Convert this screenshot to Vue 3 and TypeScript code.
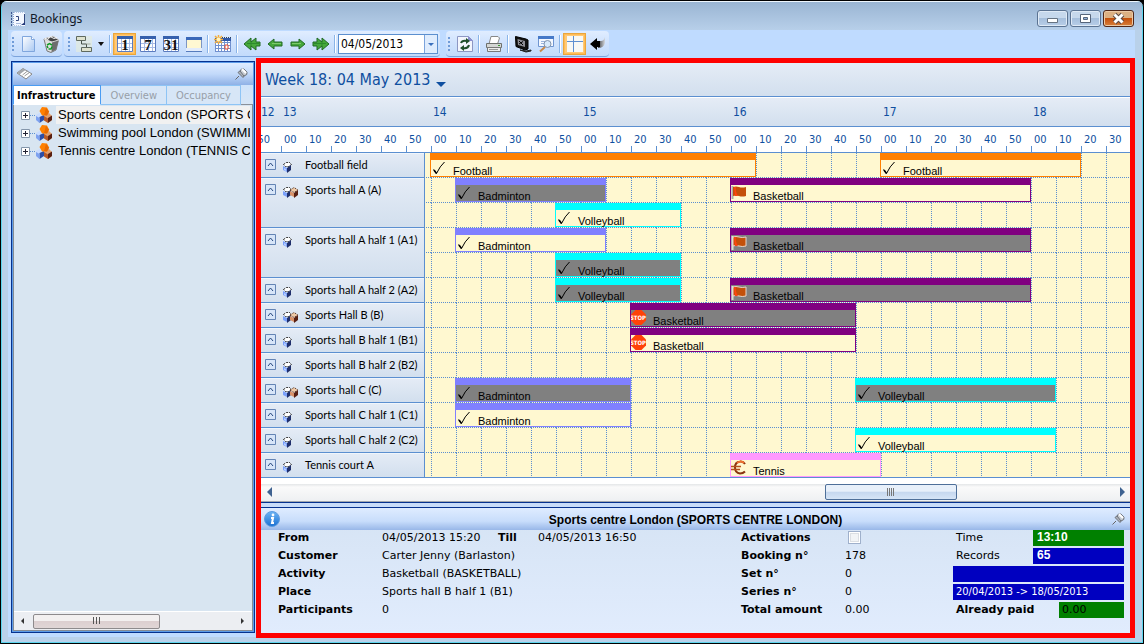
<script setup lang="ts">
import { ref } from 'vue'

interface Booking {
  title: string
  start: number
  length: number
  lane: number
  tone: string
  mark: string
  blocked?: boolean
}
interface Resource {
  name: string
  lanes: number
  combined?: boolean
  bookings: Booking[]
}

// Each slot lasts ten minutes; slot 0 begins at 14:00.
const b = (title: string, tone: string, mark: string, start: number, length: number, blocked = false, lane = 1): Booking =>
  ({ title, tone, mark, start, length, blocked, lane })

const resources: Resource[] = [
  { name: 'Football field', lanes: 1, bookings: [b('Football', 'orange', 'check', 0, 13), b('Football', 'orange', 'check', 18, 8)] },
  {
    name: 'Sports hall A (A)', lanes: 2, combined: true,
    bookings: [b('Badminton', 'violet', 'check', 1, 6, true), b('Basketball', 'purple', 'flag', 12, 12), b('Volleyball', 'cyan', 'check', 5, 5, false, 2)],
  },
  {
    name: 'Sports hall A half 1 (A1)', lanes: 2,
    bookings: [b('Badminton', 'violet', 'check', 1, 6), b('Basketball', 'purple', 'flag', 12, 12, true), b('Volleyball', 'cyan', 'check', 5, 5, true, 2)],
  },
  { name: 'Sports hall A half 2 (A2)', lanes: 1, bookings: [b('Volleyball', 'cyan', 'check', 5, 5, true), b('Basketball', 'purple', 'flag', 12, 12, true)] },
  { name: 'Sports Hall B (B)', lanes: 1, combined: true, bookings: [b('Basketball', 'purple', 'stop', 8, 9, true)] },
  { name: 'Sports hall B half 1 (B1)', lanes: 1, bookings: [b('Basketball', 'purple', 'stop', 8, 9)] },
  { name: 'Sports hall B half 2 (B2)', lanes: 1, bookings: [] },
  { name: 'Sports hall C (C)', lanes: 1, combined: true, bookings: [b('Badminton', 'violet', 'check', 1, 7, true), b('Volleyball', 'cyan', 'check', 17, 8, true)] },
  { name: 'Sports hall C half 1 (C1)', lanes: 1, bookings: [b('Badminton', 'violet', 'check', 1, 7)] },
  { name: 'Sports hall C half 2 (C2)', lanes: 1, bookings: [b('Volleyball', 'cyan', 'check', 17, 8)] },
  { name: 'Tennis court A', lanes: 1, bookings: [b('Tennis', 'pink', 'euro', 12, 6)] },
]

const hours = [13, 14, 15, 16, 17, 18]
const minutes = ['00', '10', '20', '30', '40', '50']
const centres = ['Sports centre London (SPORTS CENTRE LONDON)', 'Swimming pool London (SWIMMING POOL LONDON)', 'Tennis centre London (TENNIS CENTRE LONDON)']
const tabs = ['Infrastructure', 'Overview', 'Occupancy']
const activeTab = ref('Infrastructure')
const date = ref('04/05/2013')
const activated = ref(false)

const views = [
  { id: 'day', label: 'Day', digits: '1' },
  { id: 'week', label: 'Week', digits: '7' },
  { id: 'month', label: 'Month', digits: '31' },
]
const view = ref('day')
const steps = [
  { icon: 'i-prev2', label: 'Previous week' },
  { icon: 'i-prev', label: 'Previous day' },
  { icon: 'i-next', label: 'Next day' },
  { icon: 'i-next2', label: 'Next week' },
]
</script>

<template>
  <svg class="defs" width="0" height="0" aria-hidden="true">
    <defs>
      <pattern id="slots" x="6" y="0" width="25" height="25" patternUnits="userSpaceOnUse">
        <path d="M.5 0V25" stroke="#5b8fd0" stroke-dasharray="1 1" />
        <path d="M0 24.5H25" stroke="#5b8fd0" stroke-dasharray="1 1" />
      </pattern>
      <linearGradient id="g-page" x1="0" y1="0" x2="1" y2="1"><stop offset="0" stop-color="#fff" /><stop offset="1" stop-color="#a9c8f2" /></linearGradient>
      <linearGradient id="g-info" x1="0" y1="0" x2="0" y2="1"><stop offset="0" stop-color="#6db4f4" /><stop offset="1" stop-color="#1a70d2" /></linearGradient>
      <linearGradient id="g-fade" x1="0" y1="0" x2="1" y2="0"><stop offset="0" stop-color="#444" /><stop offset="1" stop-color="#d4d8de" /></linearGradient>
    </defs>
    <symbol id="i-app" viewBox="0 0 16 16">
      <path d="M3 1h12v14H3z" fill="#f4f8ff" /><path d="M4 1.500h11M4 14.500h7" stroke="#b4c6e4" stroke-dasharray="1 1" />
      <path d="M1.500 1v14" stroke="#3d5690" stroke-dasharray="2 1" /><path d="M3.500 1v14" stroke="#8ca4d0" stroke-dasharray="1 1" />
      <path d="M6 5.500h2.500v4H6M14.500 3v9" stroke="#33477c" fill="none" /><path d="M6 12.500h5" stroke="#a9badb" /><path d="M11 14h4v-3z" fill="#24387a" />
    </symbol>
    <symbol id="i-doc" viewBox="0 0 18 18"><path d="M3.500 1.500h9l3 3v12h-12z" fill="url(#g-page)" stroke="#7fa6dd" /><path d="M12.500 1.500v3h3" fill="#fff" stroke="#7fa6dd" /></symbol>
    <symbol id="i-bin" viewBox="0 0 18 18">
      <path d="M2 4l3 12 4 1.500 5-2.500 2.500-10-7-3z" fill="#e0e0e0" stroke="#777" /><path d="M2 4l8 3 7-2-6-4z" fill="#444" stroke="#ddd" />
      <path d="M10 7.500l-.5 9.500 4.500-2.500 2.500-9z" fill="#6d6d6d" /><path d="M5 10l2.500-1.500L10 10M10 11.500L9 14H6.500M6 13l-1-2" fill="none" stroke="#109a26" stroke-width="1.500" /><path d="M3 3.500l3 1 2-3 4 2 3-1" stroke="#f4f4f4" fill="none" />
    </symbol>
    <symbol id="i-tree" viewBox="0 0 18 18"><path d="M1 1h16v16H1z" fill="#e6ecd8" opacity=".6" /><g fill="#dfe3cf" stroke="#5f6a60"><path d="M1.500 1.500h9v4h-9zM6.500 12.500h10v4h-10z" /></g><path d="M6.500 6v3h5v3" fill="none" stroke="#47524a" /><path d="M11.500 9h4" stroke="#a5ae9e" /></symbol>
    <symbol id="i-grid" viewBox="0 0 18 18">
      <path d="M1 2h16v15H1z" fill="#fff" /><path d="M5.500 4v13M9.500 4v13M13.500 4v13M1 8.500h16M1 12.500h16" stroke="#a9bde6" /><path d="M1.500 2.500h15v14h-15z" fill="none" stroke="#5b7cc0" /><path d="M1 1h16v3H1z" fill="#3560ad" />
    </symbol>
    <symbol id="i-note" viewBox="0 0 18 18"><path d="M1.500 2.500h15v14h-15z" fill="#fff8d2" stroke="#7d96c4" /><path d="M1 2h16v3H1z" fill="#3967b8" /><path d="M1 13h16v4H1z" fill="#e3ecfb" /><path d="M1 16.500h16" stroke="#567cbd" /></symbol>
    <symbol id="i-cal" viewBox="0 0 18 18">
      <path d="M1 3h16v14H1z" fill="#fff" /><path d="M1.500 6v11M4.500 6v11M7.500 6v11M10.500 6v11M13.500 6v11M16.500 3v14M1 7.500h16M1 10.500h16M1 13.500h16M1 16.500h16" stroke="#7090cf" /><path d="M1 3h16v3H1z" fill="#2f58a8" /><path d="M8 2.500h9" stroke="#345" stroke-dasharray="1 1" />
      <path d="M11 10h3v4h-3z" fill="#fff" stroke="#e1472b" /><path d="M1 1l7 7M8 1L1 8M4.500 0v9M0 4.500h9" stroke="#f5ae3a" stroke-width="1.500" /><circle cx="4.500" cy="4.500" r="2" fill="#fff3c0" />
    </symbol>
    <symbol id="i-prev" viewBox="0 0 18 18"><path d="M2 9l6-5v3h8v4H8v3z" fill="#46a83c" stroke="#226b25" /><path d="M6 8.500h9" stroke="#7cc96c" /></symbol>
    <symbol id="i-next" viewBox="0 0 18 18"><path d="M16 9l-6-5v3H2v4h8v3z" fill="#46a83c" stroke="#226b25" /><path d="M3 8.500h9" stroke="#7cc96c" /></symbol>
    <symbol id="i-prev2" viewBox="0 0 18 18"><path d="M1 9l7-6v4l5-4v4h4v4h-4v4L8 11v4z" fill="#46a83c" stroke="#226b25" /><path d="M4 8.500h12M8 7v4" stroke="#2d8a2c" /></symbol>
    <symbol id="i-next2" viewBox="0 0 18 18"><path d="M17 9l-7-6v4L5 3v4H1v4h4v4l5-4v4z" fill="#46a83c" stroke="#226b25" /><path d="M2 8.500h12M10 7v4" stroke="#2d8a2c" /></symbol>
    <symbol id="i-refresh" viewBox="0 0 18 18"><path d="M1.500 1.500h11l4 4v11h-15z" fill="#f3f6fd" stroke="#8d97c3" /><path d="M12 1v5h5z" fill="#8a8fd0" /><path d="M5 8q1-3 6-2M13 10q-1 4-6 3" fill="none" stroke="#20502b" stroke-width="2" /><path d="M10 3l4 3-4 3zM8 10l-4 3 4 3z" fill="#20502b" /></symbol>
    <symbol id="i-print" viewBox="0 0 18 18"><path d="M6 1.500h7l1.500 1.500-2 6H4z" fill="#fff" stroke="#888" /><path d="M1.500 8.500h15v4h-15z" fill="#d4d6d4" stroke="#6d706d" /><path d="M2.500 12.500h13v4h-13z" fill="#eceeec" stroke="#777" /><path d="M4 14.500h9" stroke="#999" /><path d="M13 10.500h2" stroke="#3c9b32" /></symbol>
    <symbol id="i-monitor" viewBox="0 0 18 18"><path d="M1.500 1.500L12 4l2 1v9l-3 1L2 11.500z" fill="#111" stroke="#000" /><path d="M3.500 4L11 6v6L4 10z" fill="#8d8d94" /><path d="M5 6l4 4M9 6.500L5 9" stroke="#000" fill="none" /><path d="M6 15l6 1 5-1v1l-5 1z" fill="#333" stroke="#222" /></symbol>
    <symbol id="i-find" viewBox="0 0 18 18"><path d="M1.500 1.500h15v10h-15z" fill="#f4f8ff" stroke="#6f95d1" /><path d="M1 1h16v3H1z" fill="#4679c8" /><path d="M4 6.500h9M4 8.500h5" stroke="#9ab4dd" /><circle cx="10.500" cy="9" r="3.500" fill="#d7e9fb" stroke="#8294ad" /><path d="M8 12l-5 4.500" stroke="#c98a4a" stroke-width="2" /></symbol>
    <symbol id="i-cross" viewBox="0 0 18 18"><path d="M1 1h16v16H1z" fill="#f8f8f4" /><path d="M7.500 1v16M1 6.500h16" stroke="#5f8fd0" /></symbol>
    <symbol id="i-back" viewBox="0 0 18 18"><path d="M9 6h3q3 0 4-4v6q-1 5-7 5z" fill="url(#g-fade)" /><path d="M1 9l7-6v3h3v6H8v3z" fill="#000" /></symbol>
    <symbol id="i-pin" viewBox="0 0 14 14"><path d="M1.500 12.500L5 9" stroke="#666" /><path d="M4 5.500L9 10.500l1.500-2-4-5z" fill="#aeb4bc" stroke="#6b7078" /><path d="M6 4q1-3 4-2l3 3q1 3-3 4z" fill="#c7ccd2" stroke="#6b7078" /><path d="M8 2l4 4" stroke="#fff" stroke-width="2" /></symbol>
    <symbol id="i-tag" viewBox="0 0 18 14"><path d="M1 6l6-4.500 9 5.500-6 5z" fill="#fff" stroke="#888" /><path d="M1 6l6-4.500 2.500 1.500-6 4.500z" fill="#a4a8ac" /><path d="M6.500 8l5-4M8.500 9l5-3.500" stroke="#999" /></symbol>
    <symbol id="i-centre" viewBox="0 0 18 18">
      <path d="M1 9l3.500-2L8 9v5l-3.500 3L1 14z" fill="#c9dcff" /><path d="M4.500 11L9 9v5l-4.500 3z" fill="#2c4ea6" /><path d="M1 10l3.500 2v5L1 14z" fill="#7ea2f0" />
      <path d="M9 9l4-3 4 4v4l-4 3-4-3z" fill="#e0a070" /><path d="M13 12l4-2.500V14l-4 3z" fill="#5a2010" /><path d="M9 10l4 2.500V17l-4-2.500z" fill="#b85a28" />
      <path d="M7 1l5 .5 2 4-2 4H7L4.500 5z" fill="#ff8000" /><path d="M11 2l3 3.500-2 4-3-.5z" fill="#e86a00" />
    </symbol>
    <symbol id="i-cube" viewBox="0 0 12 12"><path d="M1.500 3.500l3-2h3l2 2-3 2h-3z" fill="#fff" stroke="#222" stroke-dasharray="2 1" /><path d="M1 5l4 2v4L1 9z" fill="#7aa0fa" /><path d="M5 7l4-3v5l-4 3z" fill="#1f2f6b" /><path d="M2 7l2 1v2L2 9z" fill="#b9d0ff" /></symbol>
    <symbol id="i-cubes" viewBox="0 0 18 12"><path d="M1.500 3.500l3-2h3l2 2-3 2h-3z" fill="#fff" stroke="#222" stroke-dasharray="2 1" /><path d="M1 5l4 2v4L1 9z" fill="#7aa0fa" /><path d="M5 7l4-3v5l-4 3z" fill="#1f2f6b" /><path d="M8 4l4-2.500L16 4l-4 2.500z" fill="#efc9a6" stroke="#4a2a1c" stroke-dasharray="1 1" /><path d="M8 5l4 2v4L8 9z" fill="#d9926a" /><path d="M12 7l4-3v5l-4 3z" fill="#571f12" /></symbol>
    <symbol id="i-check" viewBox="0 0 16 16"><path d="M2.500 9.500l3 4Q9 6 13.500 2" fill="none" stroke="#000" /><path d="M3 10l2.500 3.500" stroke="#000" stroke-width="1.600" /></symbol>
    <symbol id="i-flag" viewBox="0 0 16 16"><path d="M1.500 1v13" stroke="#aaa" stroke-width="2" /><path d="M2 2q3-1 6 0t7 0v9q-4 1-7 0t-6 0z" fill="#c4500a" /><path d="M3 2h2q-1 4 2 9H4z" fill="#ff4510" /></symbol>
    <symbol id="i-flagged" viewBox="0 0 16 16"><path d="M1.500 1v14" stroke="#ddd" stroke-width="2" /><path d="M2 2q3-1 6 0t7 0v9q-4 1-7 0t-6 0z" fill="#c4500a" stroke="#e8d8cc" /><path d="M3 2h2q-1 4 2 9H4z" fill="#ff4510" /></symbol>
    <symbol id="i-stop" viewBox="0 0 16 16"><path d="M4.500 0h6L15 4.500v6L10.500 15h-6L0 10.500v-6z" fill="#ff4208" /></symbol>
    <symbol id="i-euro" viewBox="0 0 16 16"><path d="M14 4Q12 1 9 1.500 4 2 4 7.500t5 6q3 0 5-2" fill="none" stroke="#8a3410" stroke-width="2" /><path d="M6 3q4-3 7 0" fill="none" stroke="#f07030" stroke-width="2" /><path d="M0 6.500h10M0 9.500h9" stroke="#b4501c" stroke-width="1.500" /></symbol>
    <symbol id="i-info" viewBox="0 0 16 16"><circle cx="8" cy="8" r="7.500" fill="url(#g-info)" stroke="#5d9be0" /><circle cx="9" cy="4" r="1.400" fill="#fff" /><path d="M7 7h2l-1 5h2" fill="none" stroke="#fff" stroke-width="2" /></symbol>
  </svg>

  <div class="window">
    <header class="titlebar">
      <svg class="ic16"><use href="#i-app" /></svg>
      <h1>Bookings</h1>
      <div class="caption">
        <button type="button" aria-label="Minimize"><svg viewBox="0 0 30 15"><path d="M9.500 7.500h10v4h-10z" fill="#fff" stroke="#667382" /></svg></button>
        <button type="button" aria-label="Maximize"><svg viewBox="0 0 30 15"><path d="M9.500 3.500h10v8h-10z" fill="#fff" stroke="#56657a" /><path d="M12.500 6.500h4v2h-4z" fill="#8fb0d8" stroke="#56657a" /></svg></button>
        <button type="button" class="close" aria-label="Close"><svg viewBox="0 0 30 15"><path d="M10.500 3.500l8 8M18.500 3.500l-8 8" stroke="#5c4a44" stroke-width="5" /><path d="M10.500 3.500l8 8M18.500 3.500l-8 8" stroke="#fff" stroke-width="3" /></svg></button>
      </div>
    </header>

    <div class="frame">
      <nav class="toolbar" aria-label="Tools">
        <div class="group first">
          <i class="grip"></i>
          <button type="button" aria-label="New"><svg><use href="#i-doc" /></svg></button>
          <button type="button" aria-label="Delete"><svg><use href="#i-bin" /></svg></button>
        </div>
        <div class="group main">
          <i class="grip wide"></i>
          <button type="button" aria-label="Structure"><svg><use href="#i-tree" /></svg></button>
          <button type="button" class="caret" aria-label="More structures"><svg viewBox="0 0 12 18"><path d="M3 7h6l-3 4z" fill="#111" /></svg></button>
          <i class="sep"></i>
          <button v-for="v in views" :key="v.id" type="button" :aria-label="v.label" :class="{ on: view === v.id }" @click="view = v.id">
            <svg viewBox="0 0 18 18"><use href="#i-grid" /><text x="9" y="15" class="digits">{{ v.digits }}</text></svg>
          </button>
          <button type="button" aria-label="Notes"><svg><use href="#i-note" /></svg></button>
          <i class="sep"></i>
          <button type="button" aria-label="Calendar"><svg><use href="#i-cal" /></svg></button>
          <i class="sep"></i>
          <button v-for="s in steps" :key="s.icon" type="button" :aria-label="s.label"><svg><use :href="'#' + s.icon" /></svg></button>
          <i class="sep"></i>
          <div class="datebox">
            <input v-model="date" type="text" aria-label="Date" />
            <button type="button" aria-label="Pick a date"><svg viewBox="0 0 12 18"><path d="M3 8h6l-3 3z" fill="#3b70bd" /></svg></button>
          </div>
        </div>
        <div class="group last">
          <i class="grip"></i>
          <button type="button" aria-label="Refresh"><svg><use href="#i-refresh" /></svg></button>
          <i class="sep"></i>
          <button type="button" aria-label="Print"><svg><use href="#i-print" /></svg></button>
          <i class="sep"></i>
          <button type="button" aria-label="Screen"><svg><use href="#i-monitor" /></svg></button>
          <button type="button" aria-label="Search"><svg><use href="#i-find" /></svg></button>
          <i class="sep"></i>
          <button type="button" class="on" aria-label="Layout"><svg><use href="#i-cross" /></svg></button>
          <button type="button" aria-label="Back"><svg><use href="#i-back" /></svg></button>
        </div>
      </nav>

      <div class="content">
        <aside class="side">
          <div class="sidehead">
            <svg class="tag"><use href="#i-tag" /></svg>
            <button type="button" class="pin" aria-label="Pin panel"><svg><use href="#i-pin" /></svg></button>
          </div>
          <div class="tabs" role="tablist">
            <button v-for="t in tabs" :key="t" type="button" role="tab" :aria-selected="activeTab === t" :class="{ active: activeTab === t }" @click="activeTab = t">{{ t }}</button>
          </div>
          <div class="treebox">
            <ul class="tree">
              <li v-for="(c, i) in centres" :key="c">
                <button type="button" class="plus" aria-label="Expand"><svg viewBox="0 0 9 9"><path d="M.5.5h8v8h-8z" fill="#fff" stroke="#8496ab" /><path d="M2 4.500h5M4.500 2v5" stroke="#223" /></svg></button>
                <i class="twig"></i>
                <svg class="centre"><use href="#i-centre" /></svg>
                <span :class="{ current: i === 0 }">{{ c }}</span>
              </li>
            </ul>
            <div class="hbar grey">
              <button type="button" aria-label="Scroll left"><svg viewBox="0 0 16 16"><path d="M10 5v6L7 8z" fill="#333" /></svg></button>
              <div class="thumb"><svg viewBox="0 0 10 10"><path d="M1.500 1v7M4.500 1v7M7.500 1v7" stroke="#555" /></svg></div>
              <button type="button" class="end" aria-label="Scroll right"><svg viewBox="0 0 16 16"><path d="M7 5v6l3-3z" fill="#333" /></svg></button>
            </div>
          </div>
        </aside>

        <main class="planner">
          <div class="week">
            <h2>Week 18: 04 May 2013</h2>
            <button type="button" aria-label="Choose week"><svg viewBox="0 0 10 6"><path d="M0 0h10L5 5z" fill="#0f4fa0" /></svg></button>
          </div>
          <div class="hours">
            <span class="lead">12</span>
            <span v-for="h in hours" :key="h">{{ h }}</span>
          </div>
          <div class="minutes">
            <span class="lead">50</span>
            <template v-for="h in hours" :key="h"><span v-for="m in minutes" :key="m">{{ m }}</span></template>
          </div>
          <div class="board">
            <div v-for="r in resources" :key="r.name" class="row">
              <div class="label">
                <button type="button" class="fold" :aria-label="'Collapse ' + r.name"><svg viewBox="0 0 11 11"><path d="M.5.5h10v10h-10z" fill="#d7e5f8" stroke="#6484b4" /><path d="M3 7l2.500-3L8 7" fill="none" stroke="#27487e" /></svg></button>
                <svg class="cube"><use :href="r.combined ? '#i-cubes' : '#i-cube'" :width="r.combined ? 18 : 12" height="12" /></svg>
                <span>{{ r.name }}</span>
              </div>
              <div :class="['lane', r.lanes === 2 ? 'double' : '']">
                <svg class="lines"><rect width="100%" height="100%" fill="url(#slots)" /></svg>
                <div
                  v-for="k in r.bookings" :key="k.title + k.start"
                  :class="['booking', k.tone, { blocked: k.blocked }]"
                  :style="{ gridColumn: `${k.start + 2} / span ${k.length}`, gridRow: k.lane }"
                >
                  <svg viewBox="0 0 16 16"><use :href="'#i-' + k.mark + (k.mark === 'flag' && k.blocked ? 'ged' : '')" /><text v-if="k.mark === 'stop'" x="7" y="10" class="stoptext">STOP</text></svg>
                  <span>{{ k.title }}</span>
                </div>
              </div>
            </div>
          </div>
          <div class="hbar blue">
            <button type="button" aria-label="Earlier"><svg viewBox="0 0 16 16"><path d="M11 3v10L6 8z" fill="#3f6290" /></svg></button>
            <div class="thumb"><svg viewBox="0 0 10 10"><path d="M1.500 1v8M3.500 1v8M5.500 1v8M7.500 1v8" stroke="#777" /></svg></div>
            <button type="button" class="end" aria-label="Later"><svg viewBox="0 0 16 16"><path d="M6 3v10l5-5z" fill="#3f6290" /></svg></button>
          </div>
          <div class="splitter"></div>
          <section class="info">
            <div class="infohead">
              <svg class="ic16"><use href="#i-info" /></svg>
              <h3>Sports centre London (SPORTS CENTRE LONDON)</h3>
              <button type="button" class="pin" aria-label="Pin details"><svg><use href="#i-pin" /></svg></button>
            </div>
            <div class="details">
              <dl class="facts">
                <dt>From</dt><dd class="period"><span>04/05/2013 15:20</span><b>Till</b><span>04/05/2013 16:50</span></dd>
                <dt>Customer</dt><dd>Carter Jenny (Barlaston)</dd>
                <dt>Activity</dt><dd>Basketball (BASKETBALL)</dd>
                <dt>Place</dt><dd>Sports hall B half 1 (B1)</dd>
                <dt>Participants</dt><dd>0</dd>
              </dl>
              <dl class="facts">
                <dt><label for="activations">Activations</label></dt><dd><input id="activations" v-model="activated" type="checkbox" /></dd>
                <dt>Booking n°</dt><dd>178</dd>
                <dt>Set n°</dt><dd>0</dd>
                <dt>Series n°</dt><dd>0</dd>
                <dt>Total amount</dt><dd>0.00</dd>
              </dl>
              <div class="status">
                <div class="line"><span>Time</span><strong class="green">13:10</strong></div>
                <div class="line"><span>Records</span><strong>65</strong></div>
                <div class="line wide"><em></em></div>
                <div class="line wide"><em>20/04/2013 -&gt; 18/05/2013</em></div>
                <div class="line"><b>Already paid</b><i>0.00</i></div>
              </div>
            </div>
          </section>
        </main>
      </div>
    </div>
  </div>
</template>

<style>
body { background: #000; }
</style>

<style scoped>
* { box-sizing: border-box; }
h1, h2, h3, ul, dl, dd { margin: 0; padding: 0; font-weight: normal; }
button { padding: 0; border: 0; background: none; font: inherit; color: inherit; display: flex; align-items: center; justify-content: center; flex: none; }
svg { display: block; flex: none; }
.defs { position: absolute; }
.ic16 { width: 16px; height: 16px; }

.window {
  min-height: 100vh; display: flex; flex-direction: column; overflow: hidden;
  border: 1px solid #000; border-radius: 7px 7px 0 0;
  background: #b9d1ea; box-shadow: inset 0 0 0 1px #5cd5ee;
  font-family: "DejaVu Sans Condensed", "DejaVu Sans", sans-serif; font-size: 11px; color: #000;
}
.titlebar {
  height: 29px; flex: none; display: flex; align-items: center; gap: 4px; margin: 0 1px; padding: 6px 8px 0;
  border-top: 1px solid #eef6fd; background: linear-gradient(#9ab5d3, #b7cfe9);
}
.titlebar h1 { flex: 1; font: 12px/16px "Noto Sans", sans-serif; color: #101828; }
.caption { display: flex; gap: 2px; margin-bottom: 2px; }
.caption button { width: 31px; height: 17px; border: 1px solid #5b7392; border-radius: 3px; background: linear-gradient(#c6d8ec 45%, #a6bfdc 50%, #b8cee8); box-shadow: inset 0 0 0 1px #dfeaf6; }
.caption svg { width: 30px; height: 15px; }
.caption .close { border-color: #502718; background: linear-gradient(#dcb083 45%, #c4500c 50%, #d8803a); box-shadow: inset 0 0 0 1px #ecc9a5; }

.frame { flex: 1; display: flex; flex-direction: column; margin: 0 8px 6px 7px; background: #bfdbff; }
.toolbar { height: 28px; flex: none; display: flex; align-items: flex-start; padding: 1px 0 0 3px; }
.group { height: 26px; display: flex; align-items: center; border-radius: 4px; background: linear-gradient(#e0edff, #cfe2fd 50%, #c3dbfb); border-bottom: 1px solid #7ba3dc; }
.group.main { margin-left: 2px; padding-right: 2px; }
.group.last { margin-left: 6px; }
.toolbar button { width: 23px; height: 22px; }
.toolbar button svg { width: 18px; height: 18px; }
.toolbar .caret { width: 12px; }
.toolbar .caret svg { width: 12px; }
.toolbar .on { border: 1px solid #eba63b; background: #ffc976; box-shadow: inset 0 0 0 1px #ffbb55; }
.digits { font: bold 15px "Liberation Serif", serif; text-anchor: middle; fill: #111; }
.grip { width: 4px; height: 14px; flex: none; border-left: 2px dotted #6f9bd8; margin-left: 1px; }
.grip.wide { margin-left: 4px; }
.last .grip { width: 5px; margin-left: 2px; }
.sep { width: 6px; height: 18px; flex: none; border-left: 2px solid transparent; background: linear-gradient(90deg, #8ab4e8 1px, #fff 1px, #fff 2px, transparent 2px) content-box; }
.datebox { width: 100px; height: 20px; display: flex; border: 1px solid #5b8fcf; background: #fff; }
.datebox input { flex: 1; min-width: 0; padding: 0 0 0 2px; border: 0; outline: 0; background: #fff; font: 12px "DejaVu Sans Condensed", sans-serif; color: #000; }
.toolbar .datebox button { width: 13px; height: 18px; border-left: 1px solid #7ba3dc; background: #dfecfd; }
.toolbar .datebox svg { width: 12px; }

.content { flex: 1; display: flex; }
.side { width: 244px; flex: none; display: flex; flex-direction: column; margin: 3px 0 4px 3px; border: 1px solid #05318f; background: #5c9be8; padding: 1px; }
.sidehead { height: 22px; display: flex; align-items: center; justify-content: space-between; padding: 0 5px 0 3px; background: linear-gradient(#dfecff, #c2d9fa 50%, #8fb1e6); }
.tag { width: 18px; height: 14px; }
.pin, .pin svg { width: 14px; height: 14px; }
.tabs { height: 20px; display: flex; background: linear-gradient(#cfe3fb, #d8e6f5); }
.tabs button { height: 20px; border: 1px solid #8ec4f5; border-left: 0; color: #979fa8; background: #d7e6f7; padding: 0 9px; }
.tabs .active { font-weight: bold; color: #000; background: #fff; border: 1px solid #4a9cf2; border-bottom-color: #fff; padding: 0 5px 0 3px; }
.tabs::after { content: ""; flex: 1; border-bottom: 1px solid #8a9099; }
.treebox { flex: 1; display: flex; flex-direction: column; justify-content: space-between; border: 1px solid #858b93; border-top: 0; background: #d8e5f1; overflow: hidden; }
.tree { list-style: none; padding: 1px 2px 0 7px; font: 13px/18px "Liberation Sans", Arial, sans-serif; }
.tree li { height: 18px; display: flex; align-items: center; }
.plus, .plus svg { width: 9px; height: 9px; }
.twig { width: 5px; border-top: 1px dotted #5b8fd0; }
.centre { width: 18px; height: 18px; margin-right: 3px; }
.tree span { flex: 1; min-width: 0; overflow: hidden; white-space: nowrap; padding-left: 2px; }
.tree .current { background: #f1f1f1; }

.hbar { flex: none; display: flex; align-items: center; }
.hbar button, .hbar button svg { width: 16px; height: 16px; }
.hbar .end { margin-left: auto; }
.thumb { display: flex; align-items: center; justify-content: center; border-radius: 2px; }
.thumb svg { width: 10px; height: 10px; }
.hbar.grey { height: 19px; border-top: 1px solid #fff; background: #eceef2; padding-right: 2px; }
.grey .thumb { width: 54%; height: 15px; margin-left: 3px; border: 1px solid #8d8a8c; background: linear-gradient(#f3f0f0 45%, #dccfd0 50%, #e0d6d6); }
.hbar.blue { height: 24px; padding: 6px 0 1px; background: linear-gradient(#fff 6px, #e4e6e8 6px, #fafafa 9px, #eef0f2); border-bottom: 1px solid #a3a8ae; }
.blue .thumb { width: 132px; height: 16px; margin-left: auto; border: 1px solid #4e6f99; background: linear-gradient(#e8f0fa 45%, #c5d7ee 50%, #d7e5f6); }
.blue .end { margin-left: 157px; }

.planner { flex: 1; min-width: 0; display: flex; flex-direction: column; margin-left: 1px; margin-bottom: -1px; border: 5px solid #f00; background: #dce8f6; color: #0f4fa0; }
.week { height: 34px; display: flex; align-items: center; gap: 5px; padding-left: 4px; border-bottom: 1px solid #5b8fd0; background: linear-gradient(#e5ecf6, #d2dfee); }
.week h2 { font-size: 16px; line-height: 20px; }
.week button { height: 6px; margin-top: 10px; }
.week button svg { width: 10px; height: 6px; }
.hours { height: 30px; display: grid; grid-template-columns: 20px; grid-auto-flow: column; grid-auto-columns: 150px; align-items: center; overflow: hidden; border-top: 1px solid #fff; border-bottom: 1px solid #5b8fd0; background: linear-gradient(#e5ecf6, #d2dfee); font-size: 12px; }
.hours span { padding-left: 2px; }
.hours .lead { padding: 0; }
.minutes { height: 26px; display: grid; grid-template-columns: 20px; grid-auto-flow: column; grid-auto-columns: 25px; overflow: hidden; border-bottom: 1px solid #5b8fd0; background: #fff; font-size: 11px; line-height: 25px; }
.minutes span { padding-left: 3px; background: linear-gradient(#5b8fd0, #5b8fd0) 0 100% / 1px 6px no-repeat; }
.minutes .lead { background: none; padding: 0 11px 0 0; display: flex; justify-content: flex-end; overflow: hidden; }

.board { font: 11px/14px "Liberation Sans", Arial, sans-serif; color: #000; }
.row { display: grid; grid-template-columns: 164px minmax(0, 1fr); }
.label { display: flex; align-items: flex-start; padding: 5px 0 0 4px; border-right: 1px solid #5b8fd0; border-bottom: 1px solid #5b8fd0; background: linear-gradient(#e5ecf6, #d2dfee); box-shadow: inset 0 1px #f0f5fb; white-space: nowrap; font-family: Lato, "Liberation Sans", sans-serif; }
.fold, .fold svg { width: 11px; height: 11px; }
.fold { margin: 1px 5px 0 0; }
.cube { width: 18px; height: 12px; margin: 3px 5px 0 1px; }
.lane { position: relative; display: grid; grid-template-columns: 6px; grid-auto-columns: 25px; grid-template-rows: 25px; overflow: hidden; background: #fff8d0; }
.lane.double { grid-template-rows: 25px 25px; }
.lines { position: absolute; inset: 0; width: 100%; height: 100%; }
.row:last-child .lane { border-bottom: 1px solid #5b8fd0; grid-template-rows: 24px; }
.booking { position: relative; height: 24px; margin-left: -1px; display: flex; border: 1px solid var(--tone); border-top-width: 7px; background: #fff8d0; }
.booking svg { width: 16px; height: 16px; margin-right: 6px; }
.booking span { padding-top: 4px; line-height: 15px; }
.booking.blocked { background: #808080; }
.orange { --tone: #ff8000; }
.violet { --tone: #8080ff; }
.cyan { --tone: #00ffff; }
.purple { --tone: #800080; }
.pink { --tone: #ff99ff; }
.stoptext { font: bold 6px "DejaVu Sans Condensed", sans-serif; text-anchor: middle; fill: #fff; }

.splitter { height: 6px; flex: none; border: 1px solid #05318f; border-width: 1px 0; background: #c8dcf9; }
.info { flex: 1; color: #000; background: linear-gradient(#d5e3f4, #e1ecfd); }
.infohead { height: 22px; display: flex; align-items: center; padding: 0 5px 0 3px; background: linear-gradient(#dfecff, #c8ddfb 60%, #98b7e8); }
.infohead h3 { flex: 1; text-align: center; font: bold 12px/18px "Liberation Sans", Arial, sans-serif; padding-top: 1px; }
.details { display: grid; grid-template-columns: minmax(0, 1fr) 212px 171px; padding: 0 6px 14px 17px; font: 11px/16px "DejaVu Sans", sans-serif; }
.facts { display: grid; grid-template-columns: 104px 1fr; grid-auto-rows: 16px; row-gap: 2px; align-content: start; }
.facts dt { font-weight: bold; }
.period { display: grid; grid-template-columns: 116px 40px 1fr; }
.facts input { appearance: none; display: block; width: 13px; height: 13px; margin: 1px 0 0 3px; border: 1px solid #9fb0cb; background: #f2f4f6; box-shadow: inset 0 0 0 1px #fff, inset 0 0 0 2px #dcdfe3; }
.status { display: grid; grid-auto-rows: 16px; row-gap: 2px; }
.line { display: flex; justify-content: space-between; padding-left: 3px; }
.line.wide { padding-left: 0; }
.line strong { width: 91px; padding-left: 4px; background: #0000c0; color: #fff; font: bold 12px/15px "Liberation Sans", Arial, sans-serif; }
.line strong.green { background: #008000; }
.line em { flex: 1; padding-left: 3px; background: #0000c0; color: #fff; font: 11px/15px "DejaVu Sans Condensed", sans-serif; }
.line i { width: 65px; padding-left: 3px; background: #008000; font-style: normal; }
</style>
